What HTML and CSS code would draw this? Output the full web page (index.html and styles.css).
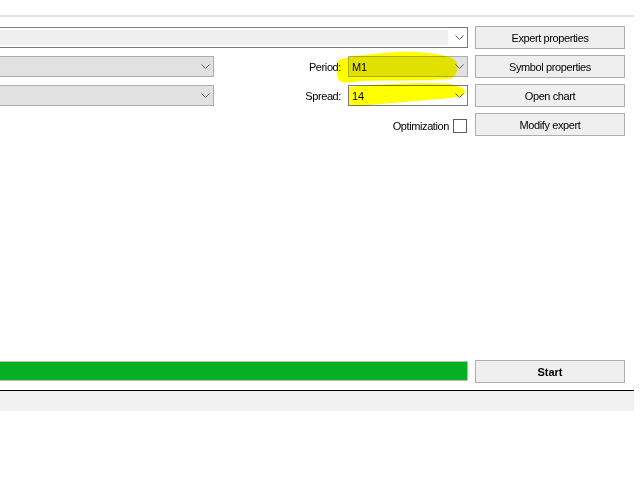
FILE: index.html
```html
<!DOCTYPE html>
<html>
<head>
<meta charset="utf-8">
<link rel="stylesheet" href="styles.css">
</head>
<body>
<div class="window">
  <div class="top-rule"></div>
  <div class="main">
    <div class="fields">
      <div class="row">
        <div class="combo combo-edit combo-wide">
          <span class="edit-field"></span>
          <svg class="chev" width="9" height="5" viewBox="0 0 9 5"><polyline points="0.5,0.5 4.5,4.5 8.5,0.5"/></svg>
        </div>
      </div>
      <div class="row">
        <div class="combo combo-list combo-left">
          <svg class="chev" width="9" height="5" viewBox="0 0 9 5"><polyline points="0.5,0.5 4.5,4.5 8.5,0.5"/></svg>
        </div>
        <span class="label">Period:</span>
        <div class="combo combo-list combo-small">
          <span class="value">M1</span>
          <svg class="chev" width="9" height="5" viewBox="0 0 9 5"><polyline points="0.5,0.5 4.5,4.5 8.5,0.5"/></svg>
        </div>
      </div>
      <div class="row">
        <div class="combo combo-list combo-left">
          <svg class="chev" width="9" height="5" viewBox="0 0 9 5"><polyline points="0.5,0.5 4.5,4.5 8.5,0.5"/></svg>
        </div>
        <span class="label">Spread:</span>
        <div class="combo combo-edit combo-small">
          <span class="value">14</span>
          <svg class="chev" width="9" height="5" viewBox="0 0 9 5"><polyline points="0.5,0.5 4.5,4.5 8.5,0.5"/></svg>
        </div>
      </div>
      <div class="row row-opt">
        <span class="label label-opt">Optimization</span>
        <span class="checkbox"></span>
      </div>
    </div>
    <div class="buttons">
      <button class="btn">Expert properties</button>
      <button class="btn">Symbol properties</button>
      <button class="btn">Open chart</button>
      <button class="btn">Modify expert</button>
    </div>
  </div>
  <div class="run-row">
    <div class="progress"></div>
    <button class="btn btn-start">Start</button>
  </div>
  <div class="status"></div>
  <svg class="highlights" width="634" height="411" viewBox="0 0 634 411">
    <path d="M338 62 C340 56 365 55 395 52 C425 51 448 55 455 60 C459 65 458 76 450 79 C425 81 390 80 362 81 C350 82 341 85 338 79 C336 73 336 66 338 62 Z"/>
    <path d="M349 87 C370 85 400 83 432 83 C452 83 463 86 465 91 C466 96 455 98 440 99 C420 101 400 102 380 104 C365 106 355 106 349 105 Z"/>
  </svg>
</div>
</body>
</html>
```
FILE: styles.css
```css
html, body {
  margin: 0;
  padding: 0;
  background: #ffffff;
}

body {
  font-family: "Liberation Sans", Arial, sans-serif;
  font-size: 11px;
  color: #000000;
}

.window {
  position: relative;
  width: 634px;
  height: 411px;
  display: flex;
  flex-direction: column;
}

.top-rule {
  margin-top: 15px;
  height: 2px;
  background: #e3e3e3;
}

.main {
  display: flex;
  column-gap: 7px;
  padding-top: 9px;
}

.fields {
  width: 468px;
  display: flex;
  flex-direction: column;
  row-gap: 6px;
}

.row {
  height: 23px;
  display: flex;
  align-items: center;
}

.combo {
  box-sizing: border-box;
  height: 21px;
  display: flex;
  align-items: center;
  border: 1px solid #adadad;
  padding-left: 3px;
}

.combo-list {
  background: #e1e1e1;
  border-color: #adadad;
}

.combo-edit {
  background: #ffffff;
  border-color: #7a7a7a;
}

.combo-wide {
  width: 468px;
  border-left: none;
  padding-left: 0;
}

.combo-left {
  width: 214px;
  border-left: none;
}

.combo-small {
  width: 120px;
}

.edit-field {
  width: 448px;
  height: 15px;
  background: #efefef;
}

.value {
  letter-spacing: -0.2px;
}

.chev {
  margin-left: auto;
  margin-right: 3px;
  fill: none;
  stroke: #5a5a5a;
  stroke-width: 1;
}

.label {
  margin-left: auto;
  margin-right: 7px;
  letter-spacing: -0.4px;
}

.row-opt {
  align-items: flex-start;
}

.label-opt {
  margin-right: 4px;
  margin-top: 7px;
}

.checkbox {
  box-sizing: border-box;
  width: 14px;
  height: 14px;
  margin-top: 6px;
  margin-right: 1px;
  border: 1px solid #5c5c5c;
  background: #ffffff;
}

.buttons {
  width: 150px;
  display: flex;
  flex-direction: column;
  row-gap: 6px;
}

.btn {
  box-sizing: border-box;
  width: 150px;
  height: 23px;
  margin: 0;
  padding: 0;
  border: 1px solid #adadad;
  background: #efefef;
  font-family: "Liberation Sans", Arial, sans-serif;
  font-size: 11px;
  letter-spacing: -0.4px;
  color: #000000;
}

.run-row {
  margin-top: auto;
  display: flex;
  align-items: flex-start;
  column-gap: 7px;
}

.progress {
  box-sizing: border-box;
  width: 468px;
  height: 20px;
  margin-top: 1px;
  border: 1px solid #bcbcbc;
  border-left: none;
  background: #06b025;
}

.btn-start {
  font-weight: bold;
  letter-spacing: 0;
}

.status {
  margin-top: 7px;
  height: 20px;
  border-top: 1px solid #000000;
  background: #f0f0f0;
}

.highlights {
  position: absolute;
  left: 0;
  top: 0;
  pointer-events: none;
  mix-blend-mode: multiply;
  fill: #ffff00;
}
```
